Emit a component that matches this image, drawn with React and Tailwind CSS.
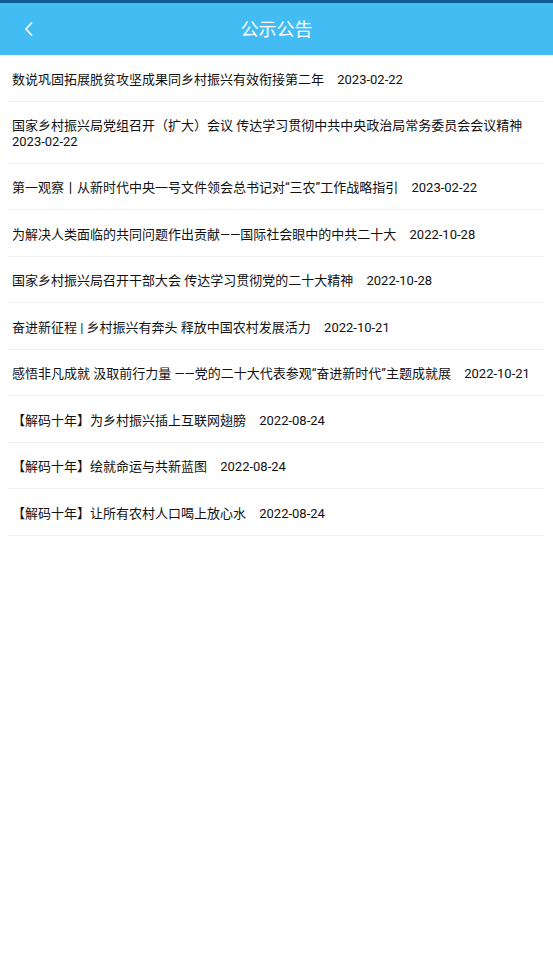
const notices = [
  { title: "数说巩固拓展脱贫攻坚成果同乡村振兴有效衔接第二年", date: "2023-02-22" },
  { title: "国家乡村振兴局党组召开（扩大）会议 传达学习贯彻中共中央政治局常务委员会会议精神", date: "2023-02-22" },
  { title: "第一观察丨从新时代中央一号文件领会总书记对“三农”工作战略指引", date: "2023-02-22" },
  { title: "为解决人类面临的共同问题作出贡献——国际社会眼中的中共二十大", date: "2022-10-28" },
  { title: "国家乡村振兴局召开干部大会 传达学习贯彻党的二十大精神", date: "2022-10-28" },
  { title: "奋进新征程 | 乡村振兴有奔头 释放中国农村发展活力", date: "2022-10-21" },
  { title: "感悟非凡成就 汲取前行力量 ——党的二十大代表参观“奋进新时代”主题成就展", date: "2022-10-21" },
  { title: "【解码十年】为乡村振兴插上互联网翅膀", date: "2022-08-24" },
  { title: "【解码十年】绘就命运与共新蓝图", date: "2022-08-24" },
  { title: "【解码十年】让所有农村人口喝上放心水", date: "2022-08-24" },
];

export default function App() {
  return (
    <div
      className="min-h-[972px] bg-white"
      style={{ fontFamily: 'Roboto, "Noto Sans CJK SC", sans-serif' }}
    >
      {/* Header */}
      <div className="h-[3px] bg-[#0f5c94]" />
      <div className="relative flex h-[52px] items-center justify-center bg-[#42bcf2]">
        <button className="absolute left-[20px] top-[14px] flex h-[24px] w-[18px] items-center justify-center">
          <svg width="10" height="16" viewBox="0 0 10 16" fill="none">
            <path d="M8 1.5L2 8l6 6.5" stroke="white" strokeWidth="1.6" />
          </svg>
        </button>
        <h1 className="text-[18px] font-normal text-white">公示公告</h1>
      </div>

      {/* List */}
      <ul className="px-[8px]">
        {notices.map((n, i) => (
          <li
            key={i}
            className="border-b border-[#f0f0f0] px-[4px] pt-[16.5px] pb-[13.5px] text-[13px] leading-[15.5px] text-[#111]"
          >
            {n.title}
            <span className="[word-spacing:10px]"> </span>
            {n.date}
          </li>
        ))}
      </ul>
    </div>
  );
}
